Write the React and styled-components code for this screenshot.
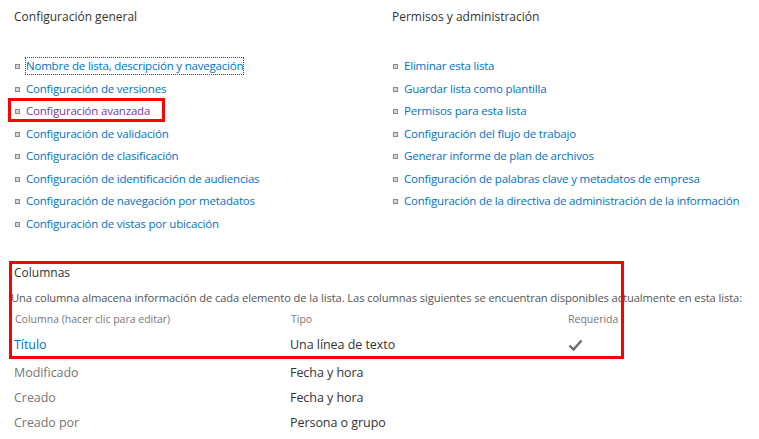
import React from "react"
import styled, { createGlobalStyle } from "styled-components"

const leftLinks = [
    "Nombre de lista, descripción y navegación",
    "Configuración de versiones",
    "Configuración avanzada",
    "Configuración de validación",
    "Configuración de clasificación",
    "Configuración de identificación de audiencias",
    "Configuración de navegación por metadatos",
    "Configuración de vistas por ubicación",
];

const rightLinks = [
    "Eliminar esta lista",
    "Guardar lista como plantilla",
    "Permisos para esta lista",
    "Configuración del flujo de trabajo",
    "Generar informe de plan de archivos",
    "Configuración de palabras clave y metadatos de empresa",
    "Configuración de la directiva de administración de la información",
];

const columns = [
    { name: "Título", type: "Una línea de texto", required: true, link: true },
    { name: "Modificado", type: "Fecha y hora" },
    { name: "Creado", type: "Fecha y hora" },
    { name: "Creado por", type: "Persona o grupo" },
];

const Check = () =>
    <svg width="15" height="12" viewBox="0 0 15 12">
        <path d="M1.5 6.5 L5.5 10.5 L13.5 1.5" fill="none" stroke="#6a6a6a" strokeWidth="2.4"/>
    </svg>;

const LinkList = ({ links, visited, focused }) =>
    <List>
        {links.map((text, i) =>
            <Item key={text}>
                <Bullet/>
                <Link visited={i === visited} focused={i === focused}>{text}</Link>
            </Item>
        )}
    </List>;

const App = () =>
    <Page>
        <GlobalStyle/>
        <TopGrid>
            <Section>
                <Heading>Configuración general</Heading>
                <LinkList links={leftLinks} visited={2} focused={0}/>
            </Section>
            <Section>
                <Heading>Permisos y administración</Heading>
                <LinkList links={rightLinks}/>
            </Section>
        </TopGrid>
        <ColumnsSection>
            <Heading>Columnas</Heading>
            <Description>Una columna almacena información de cada elemento de la lista. Las columnas siguientes se encuentran disponibles actualmente en esta lista:</Description>
            <Table>
                <HeadCell>Columna (hacer clic para editar)</HeadCell>
                <HeadCell>Tipo</HeadCell>
                <HeadCell>Requerida</HeadCell>
                {columns.map(col =>
                    <React.Fragment key={col.name}>
                        <NameCell link={col.link}>{col.name}</NameCell>
                        <TypeCell>{col.type}</TypeCell>
                        <CheckCell>{col.required && <Check/>}</CheckCell>
                    </React.Fragment>
                )}
            </Table>
        </ColumnsSection>
        <Highlight style={{ left: 8, top: 98, width: 157, height: 24 }}/>
        <Highlight style={{ left: 9, top: 261, width: 615, height: 98 }}/>
    </Page>;

const GlobalStyle = createGlobalStyle`
    body {
        margin: 0;
        background: #fff;
        font-family: "Open Sans", "Noto Sans", sans-serif;
    }
`;

const Page = styled.div`
    position: relative;
    width: 759px;
    height: 439px;
    overflow: hidden;
    padding: 8px 0 0 14px;
    box-sizing: border-box;
`;

const TopGrid = styled.div`
    display: grid;
    grid-template-columns: 378px 1fr;
`;

const Section = styled.div`
    display: flex;
    flex-direction: column;
`;

const Heading = styled.div`
    color: #333;
    font-size: 12px;
    line-height: 18px;
`;

const List = styled.div`
    display: flex;
    flex-direction: column;
    margin-top: 29px;
`;

const Item = styled.div`
    display: flex;
    align-items: center;
    height: 22.5px;
    white-space: nowrap;
`;

const Bullet = styled.span`
    width: 3px;
    height: 3px;
    margin: 1px 6px 0 1px;
    background: #d6d6d6;
    border: 1px solid #8a8a8a;
`;

const Link = styled.span`
    color: ${p => p.visited ? "#6b3fa0" : "#0072c6"};
    font-size: 11.5px;
    letter-spacing: -0.2px;
    line-height: 16px;
    outline: ${p => p.focused ? "1px dotted #444" : "none"};
`;

const ColumnsSection = styled.div`
    display: flex;
    flex-direction: column;
    margin-top: 29px;
`;

const Description = styled.div`
    color: #555;
    font-size: 11.2px;
    letter-spacing: -0.1px;
    line-height: 16px;
    margin: 8px 0 0 -3px;
    white-space: nowrap;
`;

const Table = styled.div`
    display: grid;
    grid-template-columns: 276px 277px auto;
    grid-template-rows: 15px 28px 28px 25px 25px;
    align-items: end;
    margin-top: 6px;
`;

const HeadCell = styled.div`
    align-self: center;
    color: #777;
    font-size: 10.5px;
    line-height: 15px;
    padding-left: 1px;
`;

const NameCell = styled.div`
    color: ${p => p.link ? "#0072c6" : "#777"};
    font-size: 12.5px;
    letter-spacing: -0.05px;
    line-height: 21px;
`;

const TypeCell = styled(NameCell)`
    color: #333;
`;

const CheckCell = styled.div`
    display: flex;
    align-items: center;
    padding-left: 1px;
    height: 21px;
`;

const Highlight = styled.div`
    position: absolute;
    box-sizing: border-box;
    border: 3px solid #f00;
    pointer-events: none;
`;

export default App
